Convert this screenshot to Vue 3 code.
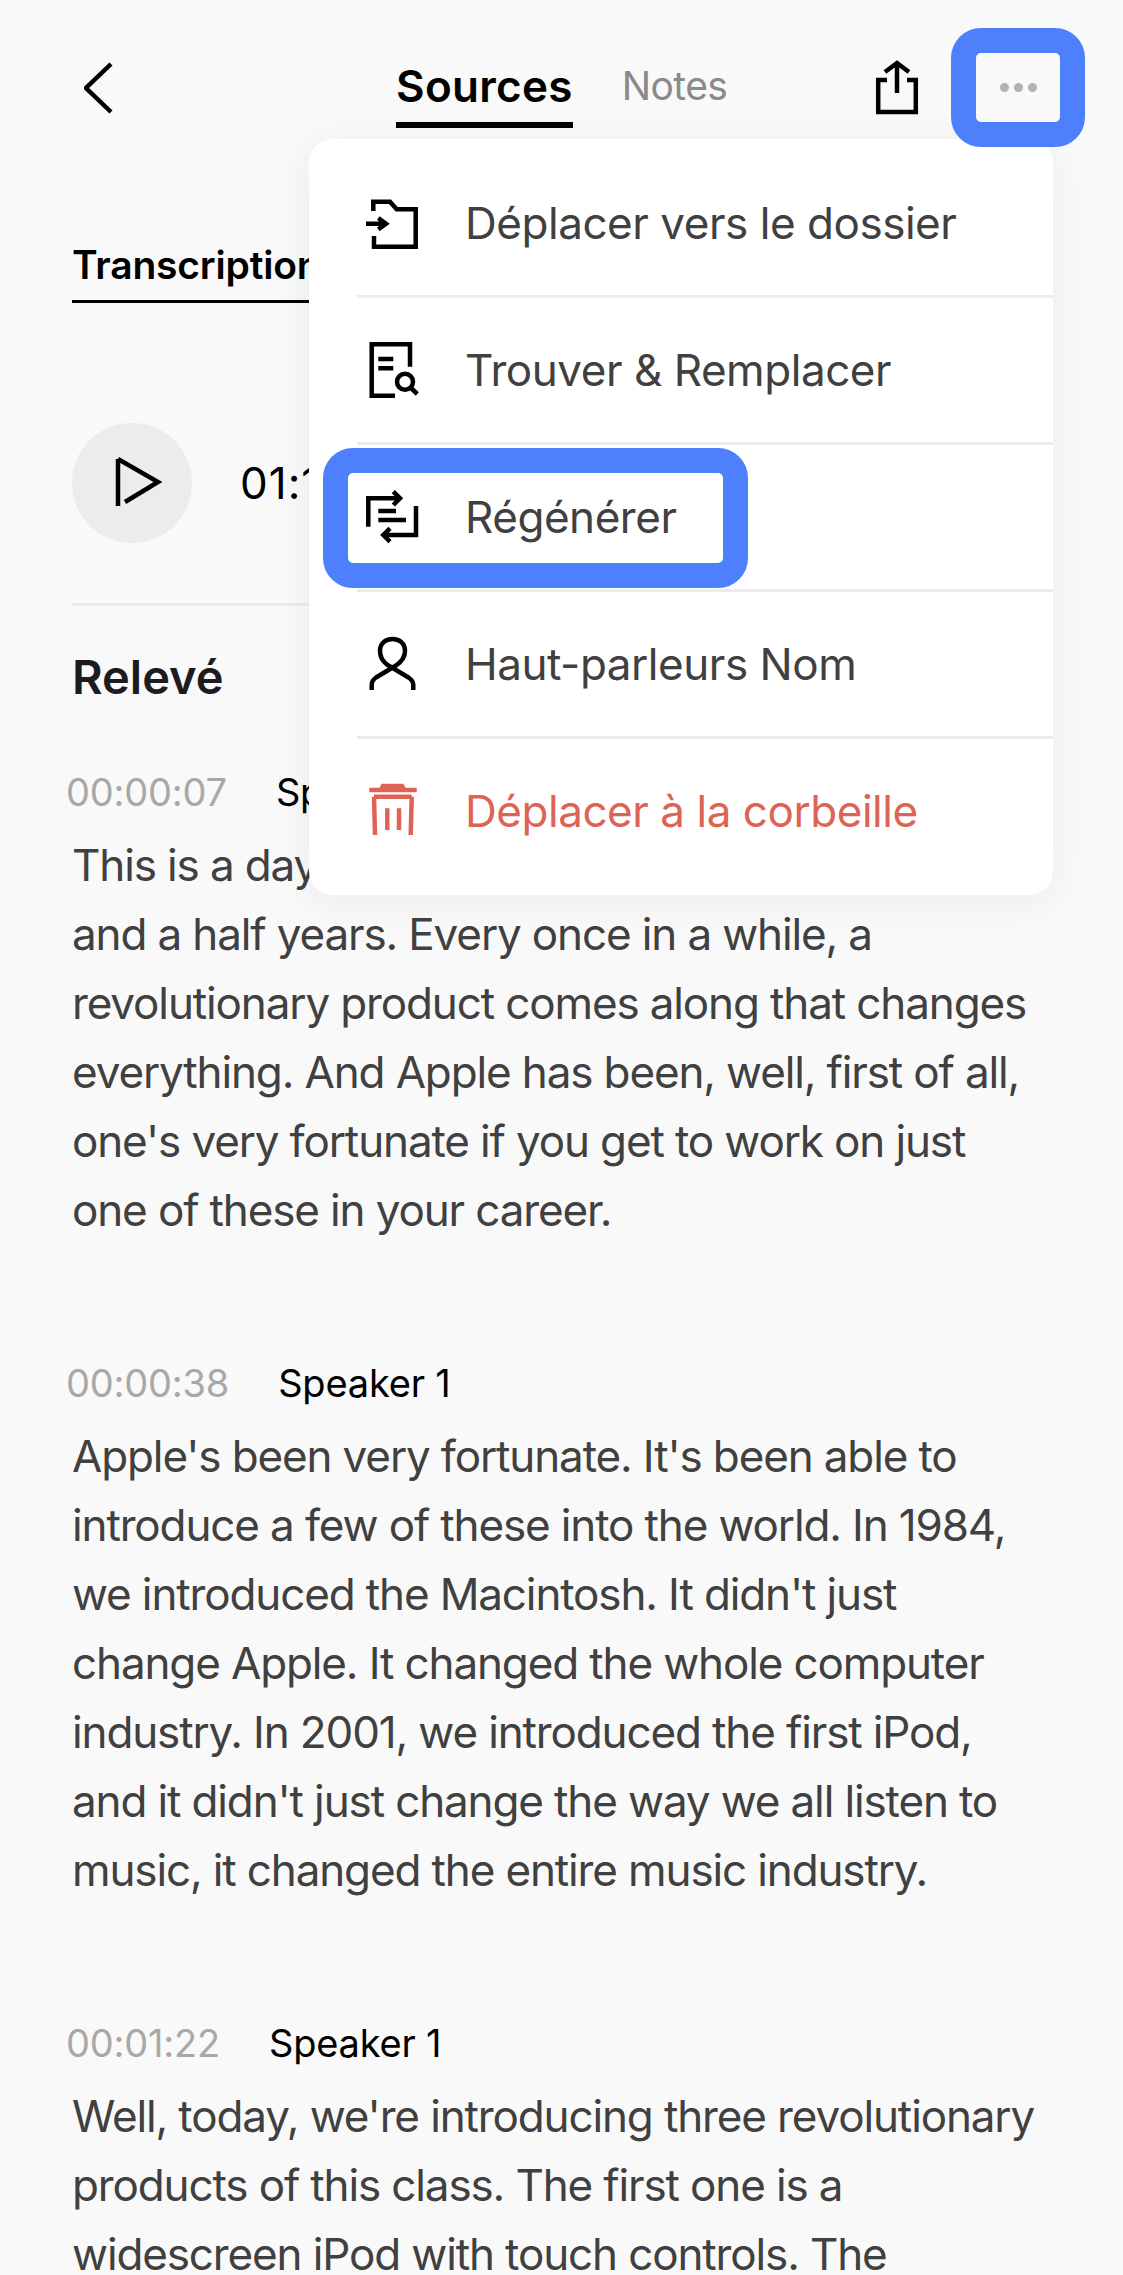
<script setup>
const menu = [
  { label: 'Déplacer vers le dossier', icon: 'folder' },
  { label: 'Trouver & Remplacer', icon: 'find' },
  { label: 'Régénérer', icon: 'regen', marked: true },
  { label: 'Haut-parleurs Nom', icon: 'person' },
  { label: 'Déplacer à la corbeille', icon: 'trash', danger: true }
]
const segments = [
  {
    time: '00:00:07',
    text: "This is a day I've been looking forward to for two and a half years. Every once in a while, a revolutionary product comes along that changes everything. And Apple has been, well, first of all, one's very fortunate if you get to work on just one of these in your career."
  },
  {
    time: '00:00:38',
    text: "Apple's been very fortunate. It's been able to introduce a few of these into the world. In 1984, we introduced the Macintosh. It didn't just change Apple. It changed the whole computer industry. In 2001, we introduced the first iPod, and it didn't just change the way we all listen to music, it changed the entire music industry."
  },
  {
    time: '00:01:22',
    text: "Well, today, we're introducing three revolutionary products of this class. The first one is a widescreen iPod with touch controls. The"
  }
]
</script>

<template>
  <div class="page">
    <header class="top">
      <svg class="back" width="30" height="52" viewBox="0 0 30 52">
        <path d="M27 2 L2 26 L27 50" />
      </svg>
      <nav class="views">
        <span class="view active">Sources</span>
        <span class="view">Notes</span>
      </nav>
      <svg class="share" width="46" height="56" viewBox="0 0 46 56">
        <path d="M13 20 H4.2 V52 H41.8 V20 H33 M23 3 V33 M11 12 L23 3 L35 12" />
      </svg>
      <button class="more">
        <i></i><i></i><i></i>
      </button>
    </header>

    <div class="tabs">
      <span class="tab">Transcription</span>
    </div>

    <div class="player">
      <div class="play">
        <svg width="48" height="54" viewBox="0 0 48 54">
          <path d="M4 3 V50 M4 3 L44 26 L11 46" />
        </svg>
      </div>
      <span class="clock">01:15:32</span>
    </div>

    <section class="script">
      <h2>Relevé</h2>
      <article v-for="s in segments" :key="s.time" class="segment">
        <div class="meta">
          <span class="time">{{ s.time }}</span>
          <span class="speaker">Speaker 1</span>
        </div>
        <p>{{ s.text }}</p>
      </article>
    </section>

    <div class="menu">
      <div v-for="m in menu" :key="m.icon" class="row" :class="{ danger: m.danger }">
        <div v-if="m.marked" class="mark"></div>
        <svg class="icon" width="64" height="64" viewBox="0 0 64 64">
          <template v-if="m.icon === 'folder'">
            <path d="M13.3 20 V10.7 H30 L36.7 18.3 H55.7 V55.7 H14 V45" />
            <path d="M6 32.7 H26 M18.3 27 L26 32.7 L18.3 38.4" />
          </template>
          <template v-else-if="m.icon === 'find'">
            <path d="M50 28.7 V6.3 H11.7 V57.7 H35" />
            <path d="M18.3 21 H33.3 M18.3 30.3 H33.3" />
            <circle cx="45" cy="43.7" r="8" />
            <path d="M51 50 L57.3 56" />
          </template>
          <template v-else-if="m.icon === 'regen'">
            <path d="M8.3 41.7 V13.3 H40 M33.3 6.7 L40 13.3 L33.3 20" />
            <path d="M56 21 V50 H23.3 M30 43.3 L23.3 50 L30 56.7" />
            <path d="M18.3 26 H36 M18.3 35 H46" />
          </template>
          <template v-else-if="m.icon === 'person'">
            <path d="M11.7 58 V53 C11.7 50 13 47.5 16 45.5 L36 33.5 C41 30 45 25.5 45 19 C45 11.5 39.5 7 32.5 7 C25.5 7 20 11.5 20 19 C20 25 23.5 30 27.5 33 L48.5 45.5 C51.5 47.5 53.3 50 53.3 53 V58" />
          </template>
          <template v-else>
            <path d="M9.3 11 H56.7 M21.5 10 L23 7 H42 L43.5 10" />
            <path d="M14 17.7 L15 56 M51.7 17.7 L50.7 56 M14 17.7 H51.7 M27.3 29.3 V51 M39 29.3 V51" />
          </template>
        </svg>
        <span class="label">{{ m.label }}</span>
      </div>
    </div>
  </div>
</template>

<style>
html, body {
  margin: 0;
  background: #f9f9f9;
}
</style>

<style scoped>
.page {
  position: relative;
  width: 1123px;
  height: 2275px;
  overflow: hidden;
  background: #f9f9f9;
  font-family: Inter, "Noto Sans", sans-serif;
  color: #404040;
}
svg {
  display: block;
  flex: none;
  fill: none;
  stroke: #000;
  stroke-width: 4.5;
}
.top {
  display: flex;
  align-items: flex-start;
  height: 147px;
  padding: 28px 38px 0 84px;
  box-sizing: border-box;
}
.back {
  margin-top: 34px;
}
.views {
  display: flex;
  gap: 49px;
  margin-left: 282px;
  margin-top: 27px;
}
.view {
  font-size: 39px;
  line-height: 62px;
  letter-spacing: -0.6px;
  color: #8a8a8a;
}
.view.active {
  font-size: 44px;
  letter-spacing: 0.3px;
  color: #000;
  font-weight: 600;
  padding-bottom: 5px;
  border-bottom: 6px solid #000;
}
.share {
  margin-left: auto;
  margin-top: 32px;
  margin-right: 31px;
}
.more {
  position: relative;
  z-index: 2;
  display: flex;
  align-items: center;
  justify-content: center;
  gap: 5px;
  width: 134px;
  height: 119px;
  box-sizing: border-box;
  padding: 0;
  background: #f9f9f9;
  border: 25px solid #4e80fd;
  border-radius: 30px;
  background-clip: padding-box;
}
.more i {
  width: 9px;
  height: 9px;
  border-radius: 50%;
  background: #b3b3b3;
}
.tabs {
  display: flex;
  margin: 88px 72px 0;
}
.tab {
  font-size: 39px;
  line-height: 60px;
  font-weight: 600;
  letter-spacing: -0.2px;
  color: #000;
  padding-bottom: 5px;
  border-bottom: 3px solid #000;
  width: 300px;
}
.player {
  display: flex;
  align-items: center;
  gap: 48px;
  margin: 120px 72px 0;
  padding-bottom: 60px;
  border-bottom: 3px solid #ececec;
}
.play {
  display: flex;
  align-items: center;
  justify-content: center;
  width: 120px;
  height: 120px;
  border-radius: 50%;
  background: #ececec;
}
.play svg {
  margin-left: 12px;
}
.clock {
  font-size: 44px;
  letter-spacing: 1px;
  color: #000;
}
.script {
  padding: 40px 72px 0;
}
h2 {
  margin: 0;
  font-size: 47px;
  line-height: 62px;
  font-weight: 600;
  color: #1c1c1e;
}
.segment {
  margin-bottom: 113px;
}
.meta {
  display: flex;
  align-items: center;
  gap: 49px;
  margin-top: 59px;
  margin-left: -6px;
  height: 50px;
}
.segment + .segment .meta {
  margin-top: 0;
}
.time {
  font-size: 38px;
  letter-spacing: -0.2px;
  color: #a8a8a8;
}
.speaker {
  font-size: 38px;
  letter-spacing: -0.2px;
  color: #000;
}
p {
  margin: 14px 0 0;
  font-size: 44px;
  line-height: 69px;
  letter-spacing: -1.13px;
}
.menu {
  position: absolute;
  left: 309px;
  top: 139px;
  width: 744px;
  height: 756px;
  box-sizing: border-box;
  padding-top: 12px;
  background: #fff;
  border-radius: 24px;
  box-shadow: 0 6px 40px rgba(0, 0, 0, 0.06);
}
.row {
  position: relative;
  display: flex;
  align-items: center;
  gap: 41px;
  height: 144px;
  margin-left: 48px;
  border-bottom: 3px solid #ececec;
}
.row:last-child {
  border-bottom: 0;
}
.icon {
  margin-left: 3px;
}
.label {
  position: relative;
  font-size: 44px;
  letter-spacing: -0.46px;
  color: #404040;
}
.danger .icon {
  stroke: #dd6454;
}
.danger .label {
  color: #dd6454;
}
.mark {
  position: absolute;
  left: -34px;
  top: 3px;
  width: 425px;
  height: 140px;
  box-sizing: border-box;
  border: 25px solid #4e80fd;
  border-radius: 30px;
}
</style>
